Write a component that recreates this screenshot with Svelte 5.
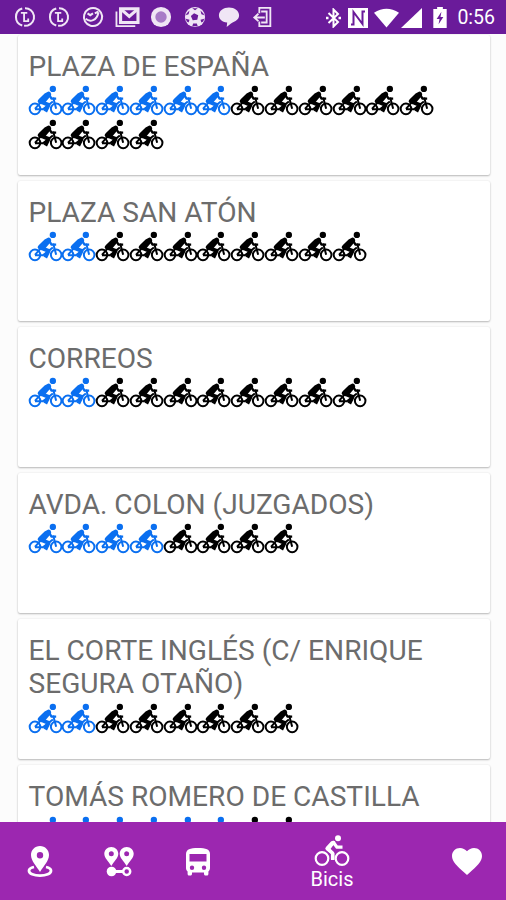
<script lang="ts">
  interface Station {
    name: string;
    available: number;
    total: number;
  }

  const stations: Station[] = [
    { name: 'PLAZA DE ESPAÑA', available: 6, total: 16 },
    { name: 'PLAZA SAN ATÓN', available: 2, total: 10 },
    { name: 'CORREOS', available: 2, total: 10 },
    { name: 'AVDA. COLON (JUZGADOS)', available: 4, total: 8 },
    { name: 'EL CORTE INGLÉS (C/ ENRIQUE SEGURA OTAÑO)', available: 2, total: 8 },
    { name: 'TOMÁS ROMERO DE CASTILLA', available: 6, total: 8 },
  ];
</script>

<div class="app">
  <header class="status">
    <div class="notifications">
      {#each [0, 1] as n (n)}
        <svg viewBox="0 0 24 24" fill="none" stroke="currentColor">
          <path d="M9 2.8A9.6 9.6 0 0 0 9 21.2M12 2.4A9.6 9.6 0 0 1 15 21.2L11 21.6" stroke-width="2.2" />
          <path d="M7.5 7.5h7M11 7.5v9M10 16.500h5.500v-3" stroke-width="2" />
        </svg>
      {/each}
      <svg viewBox="0 0 24 24" fill="none" stroke="currentColor" stroke-width="2.2">
        <ellipse cx="12" cy="12" rx="10" ry="9.8" transform="rotate(-30 12 12)" />
        <path d="M4 14c5 4 12 2 14-7M6 8l3 2 3-2M14 8l4-2" />
      </svg>
      <svg class="wide" viewBox="0 0 28 24" fill="none" stroke="currentColor">
        <path d="M7 3h19v15H7z" stroke-width="3.4" />
        <path d="M8 4l8.5 7.5L25 4" stroke-width="3.4" />
        <path d="M2.5 6v16H23" stroke-width="2" />
      </svg>
      <svg viewBox="0 0 24 24" fill="currentColor">
        <circle cx="12" cy="12" r="11" />
        <circle cx="12" cy="12" r="6.2" fill="#a87bc7" />
      </svg>
      <svg viewBox="0 0 24 24" fill="currentColor">
        <circle cx="12" cy="12" r="11" />
        <path
          fill="#6a1b9a"
          d="M11 8l4.500 2-1 5-5 .5L7.500 11zM9 2.500l3 2 3-2zM2 10l3-1 1-4-3 3zM22 10l-3-1-1-4 3 3zM5 18l1-3-4-1 1 3zM19 18l-1-3 4-1-1 3zM10 19h4l1 3H9z"
        />
      </svg>
      <svg viewBox="0 0 24 24" fill="currentColor">
        <path d="M12 1.5c6 0 11 3.5 11 8.5 0 4-3 6-6 7.5C15 18.5 13 20 9.5 23l.5-5C4 17.5 1 14 1 10c0-5 5-8.5 11-8.5z" />
      </svg>
      <svg viewBox="0 0 24 24" fill="none" stroke="currentColor" stroke-width="2">
        <path d="M8 8V2h12v20H8v-5M10 6h6v12h-6" />
        <path d="M2 12.5h12M7 8.5l-4.5 4L7 16.5" />
      </svg>
    </div>
    <div class="system">
      <svg class="bluetooth" viewBox="0 0 17 20" fill="none" stroke="currentColor" stroke-width="2">
        <path d="M3.5 5l9.5 9-4.5 4.5v-17L13 6l-9.5 9" />
        <path d="M1 10h2.5M13.5 10H16" stroke-width="2.4" />
      </svg>
      <svg class="nfc" viewBox="0 0 22 20" fill="currentColor">
        <path d="M1 0h20v20H1z" />
        <path d="M6.500 16.500V4l9 12V3.500M4 16.500h3.500M14.500 3.500H18" fill="none" stroke="#6a1b9a" stroke-width="2" />
      </svg>
      <svg class="wifi" viewBox="0 0 26 20" fill="currentColor">
        <path d="M0 4.5Q13-4 26 4.5L13 20z" />
      </svg>
      <svg class="signal" viewBox="0 0 21 20" fill="currentColor">
        <path d="M21 0v20H0z" />
      </svg>
      <svg class="battery" viewBox="0 0 14 22" fill="currentColor">
        <path d="M4 0h6v2h4v20H0V2h4z" />
        <path d="M8.5 5L3.5 12.5h3L5.5 18l5-7.5h-3z" fill="#6a1b9a" />
      </svg>
      <span class="clock">0:56</span>
    </div>
  </header>

  <main class="list">
    {#each stations as station (station.name)}
      <section class="card">
        <h2>{station.name}</h2>
        <div class="bikes">
          {#each Array(station.total) as _, i}
            <svg class="bike" class:free={i < station.available} viewBox="0 0 102 102">
              <g fill="none" stroke="currentColor">
                <circle cx="18" cy="72" r="16" stroke-width="6" />
                <circle cx="82" cy="72" r="16" stroke-width="6" />
                <path d="M18 72L34 54M18 73h24L72 50M73 38l9 34" stroke-width="6" />
                <path d="M60 28l8 13h14" stroke-width="7" stroke-linejoin="round" />
                <path d="M39 52l20 8-10 20" stroke-width="12" stroke-linejoin="round" />
              </g>
              <g fill="currentColor">
                <circle cx="72" cy="12" r="9.5" />
                <path d="M57 20q8-1 10 7 1 5-4 9L49 53l-12 5q-10-2-11-8 0-4 4-8l17-16z" />
              </g>
            </svg>
          {/each}
        </div>
      </section>
    {/each}
  </main>

  <nav class="tabs">
    <button class="tab" aria-label="Paradas">
      <svg width="26" height="32" viewBox="0 0 26 32">
        <path
          fill="currentColor"
          fill-rule="evenodd"
          d="M13 0c5.2 0 9 4 9 9 0 6-5.5 11-9 17C9.5 20 4 15 4 9c0-5 3.8-9 9-9zm0 6a3.2 3.2 0 1 0 0 6.400A3.2 3.2 0 0 0 13 6z"
        />
        <path
          d="M7 21c-3.500.8-5 2-5 3.700 0 3 5 5 11 5s11-2 11-5c0-1.700-1.500-2.900-5-3.700"
          fill="none"
          stroke="currentColor"
          stroke-width="2.8"
        />
      </svg>
    </button>
    <button class="tab" aria-label="Rutas">
      <svg width="30" height="30" viewBox="0 0 30 30">
        {#each [7.3, 22.7] as x (x)}
          <path
            transform="translate({x} 0)"
            fill="currentColor"
            fill-rule="evenodd"
            d="M0 0c4 0 7 3 7 6.800C7 11 3 14 0 19-3 14-7 11-7 6.800-7 3-4 0 0 0zm0 4.300a2.500 2.500 0 1 0 0 5 2.500 2.500 0 0 0 0-5z"
          />
        {/each}
        <circle cx="7.5" cy="24.5" r="4.8" fill="currentColor" />
        <path d="M8 24.5h12" stroke="currentColor" stroke-width="3" />
        <circle cx="22.7" cy="24.5" r="3.5" fill="none" stroke="currentColor" stroke-width="2.5" />
      </svg>
    </button>
    <button class="tab" aria-label="Bus">
      <svg width="26" height="28" viewBox="0 0 26 28">
        <path
          fill="currentColor"
          fill-rule="evenodd"
          d="M1 6c0-4.500 4-6 12-6s12 1.500 12 6v14c0 1.500-.6 2.500-1.600 3.400V26c0 .8-.6 1.500-1.400 1.500h-1.500c-.8 0-1.500-.7-1.500-1.500v-1.500H7V26c0 .8-.7 1.500-1.500 1.500H4c-.8 0-1.400-.7-1.400-1.500v-2.600C1.600 22.500 1 21.500 1 20zm3.500 0v7.500h17V6zM7 17.500a2.200 2.200 0 1 0 0 4.400 2.200 2.200 0 0 0 0-4.400zm12 0a2.200 2.200 0 1 0 0 4.400 2.200 2.200 0 0 0 0-4.400z"
        />
      </svg>
    </button>
    <button class="tab active">
      <svg width="36" height="32" viewBox="0 0 36 32">
        <g fill="none" stroke="currentColor">
          <circle cx="8" cy="23.5" r="6.3" stroke-width="2.2" />
          <circle cx="28" cy="23.5" r="6.3" stroke-width="2.2" />
          <path d="M18.5 24.5V18l-5-4.5 6-6 3.500 4.700h5.500" stroke-width="3.2" stroke-linejoin="round" />
        </g>
        <path d="M12 12l5-5.5q2.500-1.500 4.500.5l-5 7 4 4v7h-3.500v-6l-5-4q-1.500-1.500 0-3z" fill="currentColor" />
        <circle cx="24" cy="3.3" r="3" fill="currentColor" />
      </svg>
      <span>Bicis</span>
    </button>
    <button class="tab" aria-label="Favoritos">
      <svg width="30" height="27" viewBox="0 0 30 27">
        <path
          fill="currentColor"
          d="M15 27l-2.200-2C5 18 0 13.500 0 8c0-4.500 3.500-8 8-8 2.700 0 5.300 1.300 7 3.300C16.700 1.300 19.300 0 22 0c4.500 0 8 3.500 8 8 0 5.500-5 10-12.800 17z"
        />
      </svg>
    </button>
  </nav>
</div>

<style>
  :global(body) {
    margin: 0;
  }
  .app {
    display: flex;
    flex-direction: column;
    height: 900px;
    overflow: hidden;
    background: #fcfcfc;
    font-family: Roboto, sans-serif;
  }
  .status {
    display: flex;
    flex: none;
    align-items: center;
    justify-content: space-between;
    box-sizing: border-box;
    height: 34px;
    padding: 0 11px 0 14px;
    background: #6a1b9a;
    color: #f0e6f5;
  }
  .notifications {
    display: flex;
    align-items: center;
    gap: 12px;
  }
  .notifications svg {
    width: 22px;
    height: 22px;
  }
  .notifications .wide {
    width: 26px;
    margin: 0 -2px;
  }
  .system {
    display: flex;
    align-items: center;
    padding-top: 1px;
    color: #fff;
  }
  .bluetooth {
    width: 17px;
    height: 20px;
    margin-right: 5px;
  }
  .nfc {
    width: 22px;
    height: 20px;
    margin-right: 5px;
  }
  .wifi {
    width: 25px;
    height: 20px;
    margin-right: 2px;
  }
  .signal {
    width: 21px;
    height: 20px;
    margin-right: 11px;
  }
  .battery {
    width: 14px;
    height: 21px;
    margin-right: 10px;
  }
  .clock {
    font-size: 19.5px;
  }
  .list {
    display: flex;
    flex: 1;
    flex-direction: column;
    gap: 6.2px;
    min-height: 0;
    padding: 0.5px 16px 0 18px;
    overflow: hidden;
  }
  .card {
    flex: none;
    box-sizing: border-box;
    height: 140px;
    padding: 15px 10.5px 0;
    border-radius: 2px;
    background: #fff;
    box-shadow:
      0 1px 2px rgba(0, 0, 0, 0.26),
      0 0 2px rgba(0, 0, 0, 0.08);
  }
  h2 {
    margin: 0;
    color: #6c6c6c;
    font-size: 28.1px;
    font-weight: 400;
    line-height: 33px;
  }
  .bikes {
    display: flex;
    flex-wrap: wrap;
    width: 406px;
    padding-top: 2.4px;
  }
  .bike {
    flex: none;
    width: 33.8px;
    height: 33.8px;
    overflow: visible;
    color: #000;
  }
  .bike.free {
    color: #0a6ff0;
  }
  .tabs {
    display: flex;
    flex: none;
    align-items: center;
    height: 78px;
    background: #9c27b0;
    color: #fff;
  }
  .tab {
    display: flex;
    flex: 0 0 79px;
    flex-direction: column;
    align-items: center;
    padding: 1px 0 0;
    border: 0;
    background: none;
    color: inherit;
    font: 20px/24px Roboto, sans-serif;
  }
  .tab.active {
    flex: 1;
    padding-top: 3px;
  }
</style>
